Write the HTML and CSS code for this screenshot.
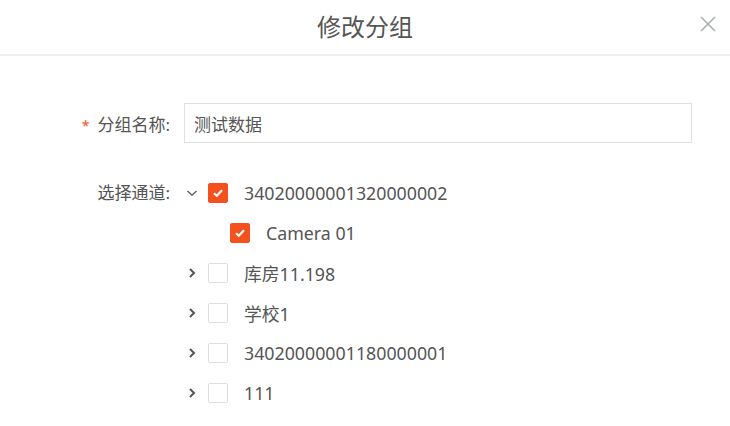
FILE: index.html
```html
<!DOCTYPE html>
<html lang="zh-CN">
<head>
  <meta charset="UTF-8">
  <title>修改分组</title>
  <link rel="stylesheet" href="styles.css">
</head>
<body>

  <div class="dialog">
    <div class="dialog-header">
      <h2>修改分组</h2>
      <button class="close-btn" aria-label="关闭">
        <svg width="16" height="16" viewBox="0 0 16 16"><path d="M1 1L15 15M15 1L1 15" stroke="currentColor" stroke-width="1.6" fill="none"/></svg>
      </button>
    </div>

    <div class="dialog-body">
      <div class="form-row">
        <label class="form-label"><span class="required">*</span>分组名称:</label>
        <input type="text" class="form-input" value="测试数据">
      </div>

      <div class="form-row tree-row">
        <label class="form-label">选择通道:</label>
        <div class="tree">
          <div class="node">
            <span class="toggle">
              <svg width="12" height="8" viewBox="0 0 12 8"><path d="M1.5 2L6 6.2L10.5 2" stroke="#666" stroke-width="1.5" fill="none"/></svg>
            </span>
            <span class="check checked"><svg width="12" height="10" viewBox="0 0 12 10"><path d="M2 5.2L4.8 7.8L10 2.2" stroke="#fff" stroke-width="2.2" fill="none"/></svg></span>
            <span class="node-text">34020000001320000002</span>
          </div>
          <div class="node child">
            <span class="toggle"></span>
            <span class="check checked"><svg width="12" height="10" viewBox="0 0 12 10"><path d="M2 5.2L4.8 7.8L10 2.2" stroke="#fff" stroke-width="2.2" fill="none"/></svg></span>
            <span class="node-text">Camera 01</span>
          </div>
          <div class="node">
            <span class="toggle"><svg width="8" height="12" viewBox="0 0 8 12"><path d="M2 2L6 6L2 10" stroke="#555" stroke-width="2" fill="none"/></svg></span>
            <span class="check"></span>
            <span class="node-text">库房11.198</span>
          </div>
          <div class="node">
            <span class="toggle"><svg width="8" height="12" viewBox="0 0 8 12"><path d="M2 2L6 6L2 10" stroke="#555" stroke-width="2" fill="none"/></svg></span>
            <span class="check"></span>
            <span class="node-text">学校1</span>
          </div>
          <div class="node">
            <span class="toggle"><svg width="8" height="12" viewBox="0 0 8 12"><path d="M2 2L6 6L2 10" stroke="#555" stroke-width="2" fill="none"/></svg></span>
            <span class="check"></span>
            <span class="node-text">34020000001180000001</span>
          </div>
          <div class="node">
            <span class="toggle"><svg width="8" height="12" viewBox="0 0 8 12"><path d="M2 2L6 6L2 10" stroke="#555" stroke-width="2" fill="none"/></svg></span>
            <span class="check"></span>
            <span class="node-text">111</span>
          </div>
        </div>
      </div>
    </div>
  </div>

</body>
</html>
```

FILE: styles.css
```css
body {
  font-family: "Noto Sans", "Noto Sans CJK SC", sans-serif;
  background: #fff;
  color: #555;
  margin: 0;
}
.dialog {
  width: 730px;
  height: 426px;
  background: white;
  overflow: hidden;
}
.dialog-header {
  height: 54px;
  border-bottom: 2px solid #f0f0f0;
  display: flex;
  align-items: center;
  justify-content: center;
  position: relative;
}
.dialog-header h2 {
  margin: 0;
  font-size: 24px;
  font-weight: normal;
  color: #555;
  line-height: 1;
}
.close-btn {
  position: absolute;
  right: 14px;
  top: 16px;
  padding: 0;
  border: none;
  background: none;
  color: #aab0b8;
  cursor: pointer;
  display: flex;
}
.dialog-body {
  padding-top: 47px;
}
.form-row {
  display: flex;
  align-items: center;
  margin-bottom: 30px;
}
.form-label {
  width: 170px;
  margin-right: 14px;
  text-align: right;
  font-size: 17px;
  color: #555;
  flex-shrink: 0;
}
.required {
  color: #f4511e;
  margin-right: 8px;
  font-size: 14px;
}
.form-input {
  width: 508px;
  height: 40px;
  box-sizing: border-box;
  border: 1px solid #e0e0e0;
  padding: 0 9px;
  font-family: inherit;
  font-size: 17px;
  color: #555;
  outline: none;
}
.tree-row {
  align-items: flex-start;
}
.tree-row .form-label {
  line-height: 40px;
}
.node {
  height: 40px;
  display: flex;
  align-items: center;
  font-size: 17.8px;
}
.node.child {
  padding-left: 22px;
}
.toggle {
  width: 16px;
  margin-right: 8px;
  display: flex;
  justify-content: center;
  align-items: center;
}
.check {
  width: 20px;
  height: 20px;
  box-sizing: border-box;
  border: 1px solid #ddd;
  border-radius: 2px;
  background: #fff;
  margin-right: 16px;
  display: flex;
  align-items: center;
  justify-content: center;
}
.check.checked {
  background: #f4511e;
  border-color: #f4511e;
}
.node-text {
  color: #555;
}
```
